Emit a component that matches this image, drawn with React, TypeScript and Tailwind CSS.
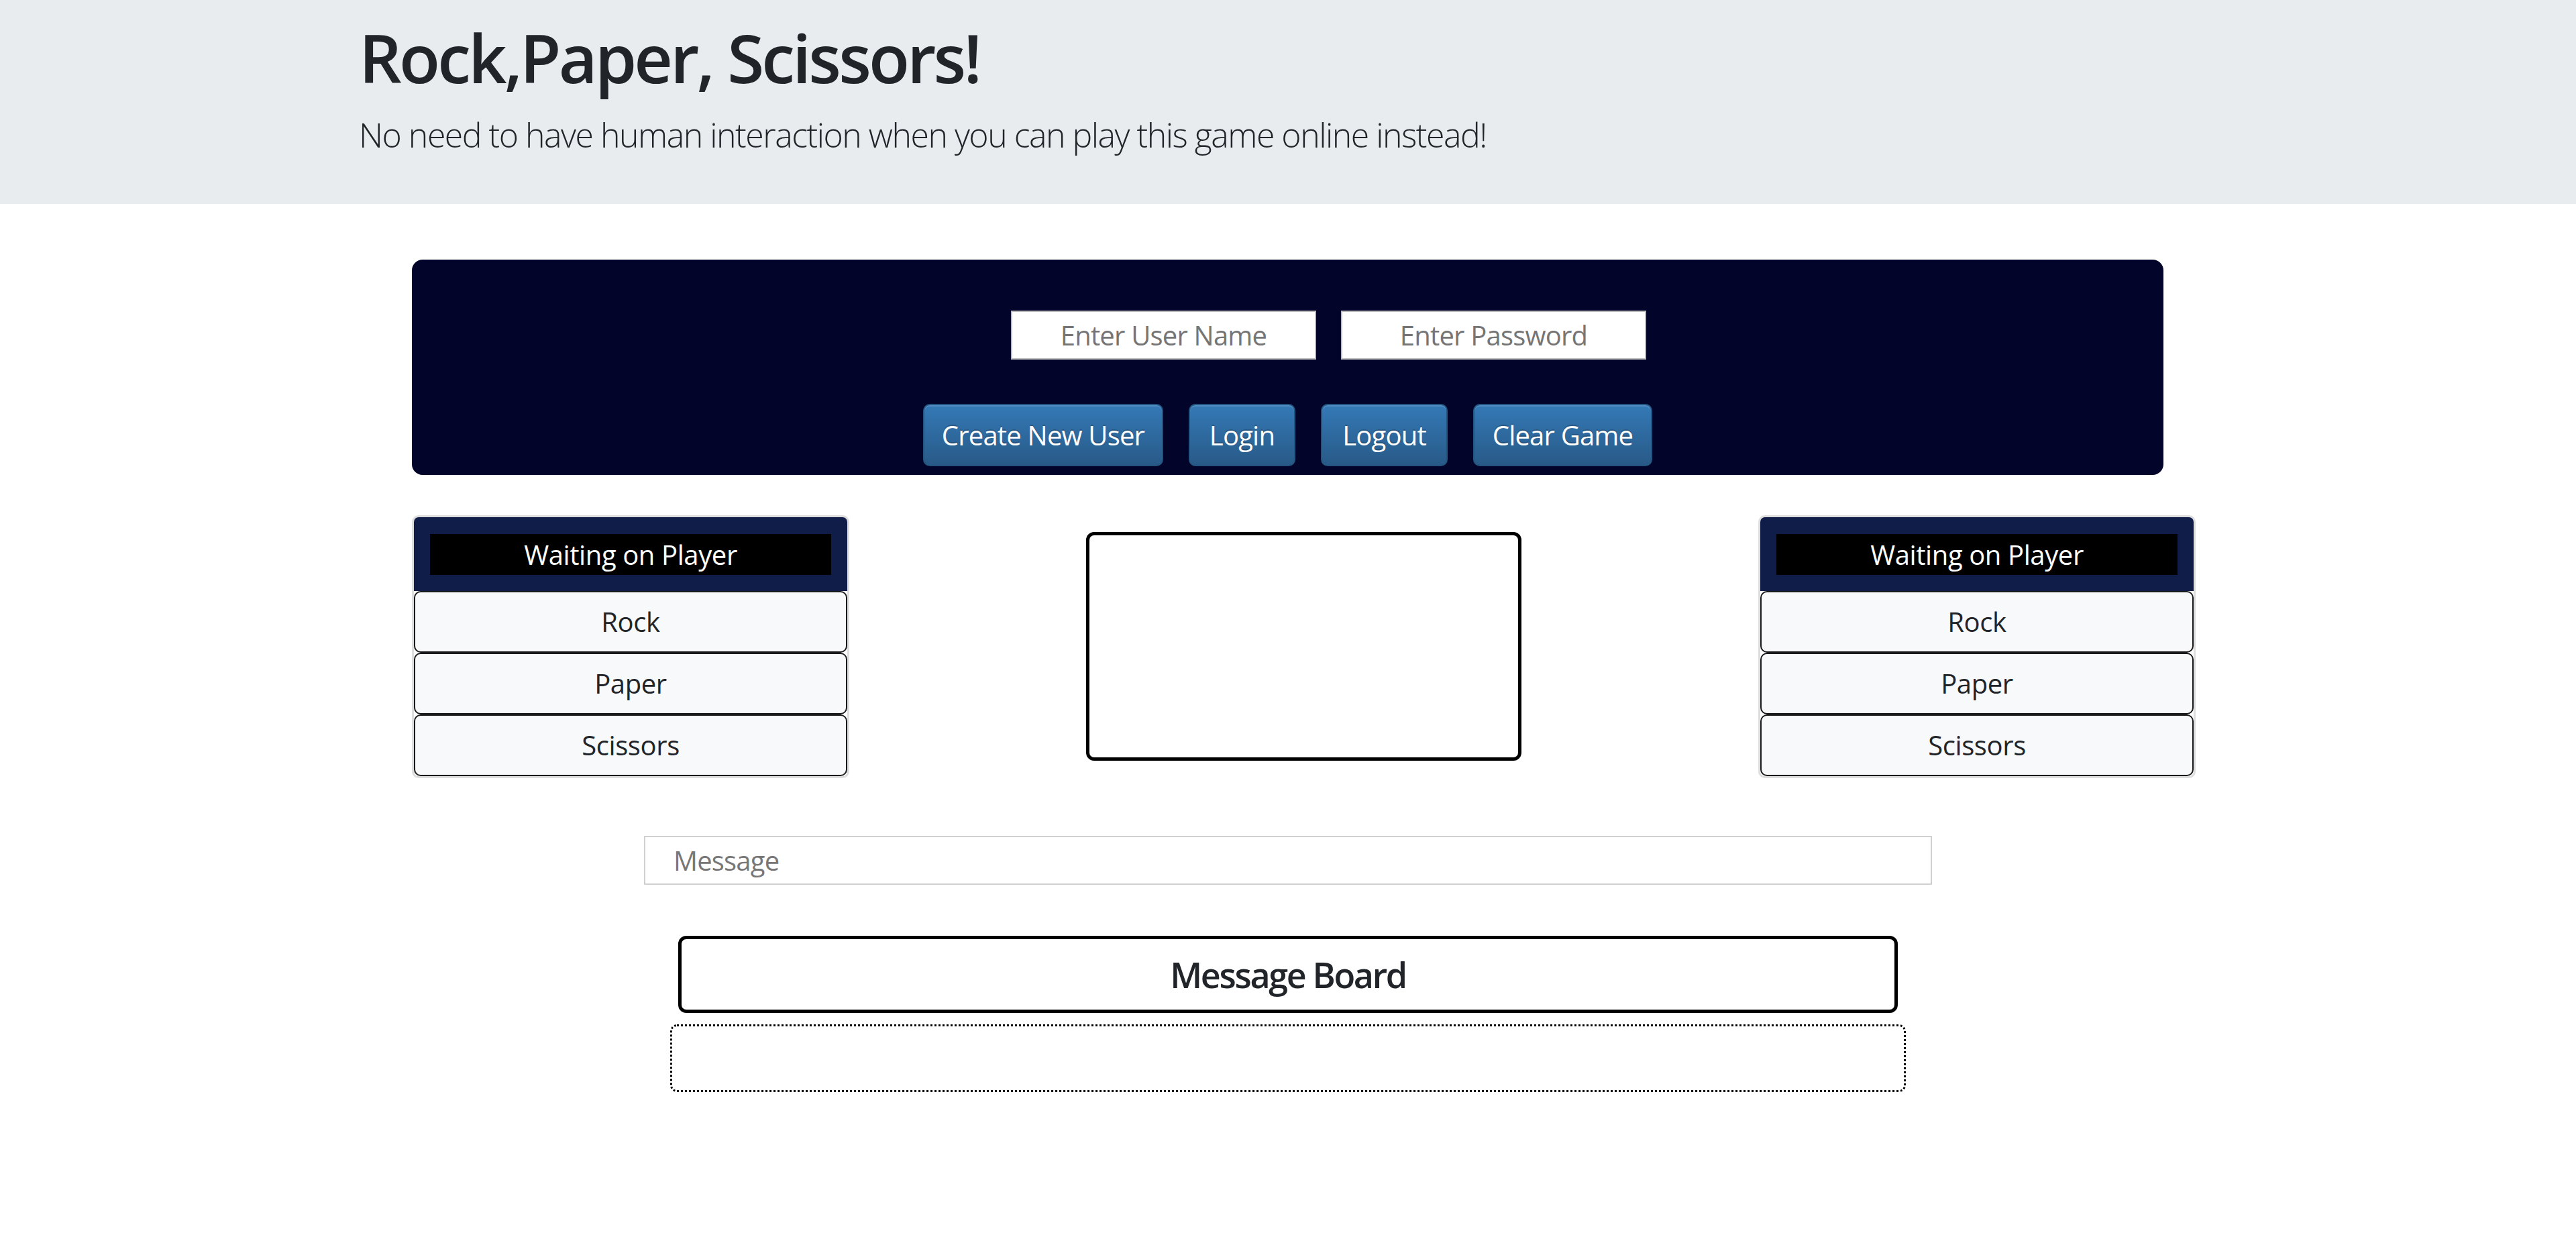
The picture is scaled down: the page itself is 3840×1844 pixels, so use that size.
import { useState } from "react";

const MOVES = ["Rock", "Paper", "Scissors"];

function PlayerCard() {
  return (
    <div className="w-[652px] border-[3px] border-[#dedede] rounded-[10px] overflow-hidden bg-white">
      {/* Status header */}
      <div className="bg-[#0f1d48] h-[110px] pt-[25px] px-[24px]">
        <div className="bg-black h-[61px] flex items-center justify-center text-white text-[40px] leading-none tracking-[-0.01em]">
          Waiting on Player
        </div>
      </div>
      {MOVES.map((m) => (
        <button
          key={m}
          className="w-full h-[92px] bg-[#f8f9fa] border-2 border-[#1a1a1a] rounded-[10px] text-[#212529] text-[40px] leading-none tracking-[-0.01em] flex items-center justify-center"
        >
          {m}
        </button>
      ))}
    </div>
  );
}

function ActionButton({ label, width }: { label: string; width: string }) {
  return (
    <button
      className={`${width} h-[93px] rounded-[10px] border-2 border-[#245580] bg-gradient-to-b from-[#3479b6] to-[#285a88] text-white text-[40px] leading-none tracking-[-0.02em] shadow-[inset_0_2px_0_rgba(255,255,255,0.15)] [text-shadow:0_-2px_0_rgba(0,0,0,0.2)]`}
    >
      {label}
    </button>
  );
}

export default function App() {
  const [user, setUser] = useState("");
  const [pass, setPass] = useState("");
  const [msg, setMsg] = useState("");

  return (
    <div className="min-h-screen bg-white text-[#212529] font-['Open_Sans','Noto_Sans',sans-serif]">
      {/* Jumbotron */}
      <header className="bg-[#e9ecef] h-[304px]">
        <div className="w-[2850px] mx-auto px-[40px] pt-[25px]">
          <h1 className="text-[100px] font-semibold leading-[1.2] tracking-[-0.038em] mb-[19px]">Rock,Paper, Scissors!</h1>
          <p className="text-[50px] font-light leading-[1.5] tracking-[-0.03em]">
            No need to have human interaction when you can play this game online instead!
          </p>
        </div>
      </header>

      <main className="w-[2659px] ml-[614px] mt-[83px]">
        {/* Login panel */}
        <div className="w-[2611px] h-[321px] rounded-[16px] bg-[#02042a] flex flex-col items-center pt-[76px]">
          <div className="flex gap-[37px] pl-[122px]">
            <input
              value={user}
              onChange={(e) => setUser(e.target.value)}
              placeholder="Enter User Name"
              className="w-[455px] h-[73px] bg-white border-2 border-[#bdbdbd] text-center text-[40px] tracking-[-0.02em] placeholder:text-[#757575] outline-none"
            />
            <input
              type="password"
              value={pass}
              onChange={(e) => setPass(e.target.value)}
              placeholder="Enter Password"
              className="w-[455px] h-[73px] bg-white border-2 border-[#bdbdbd] text-center text-[40px] tracking-[-0.02em] placeholder:text-[#757575] outline-none"
            />
          </div>
          <div className="flex gap-[38px] mt-[66px]">
            <ActionButton label="Create New User" width="w-[358px]" />
            <ActionButton label="Login" width="w-[159px]" />
            <ActionButton label="Logout" width="w-[189px]" />
            <ActionButton label="Clear Game" width="w-[267px]" />
          </div>
        </div>

        {/* Players + result */}
        <div className="flex justify-between items-start mt-[60px]">
          <PlayerCard />
          <div className="w-[649px] h-[341px] mt-[25px] border-[5px] border-black rounded-[12px]" />
          <PlayerCard />
        </div>
      </main>

      {/* Messages */}
      <div className="w-[1920px] mx-auto mt-[86px]">
        <input
          value={msg}
          onChange={(e) => setMsg(e.target.value)}
          placeholder="Message"
          className="w-full h-[73px] border-2 border-[#d0d0d0] px-[42px] text-[40px] tracking-[-0.02em] placeholder:text-[#777] outline-none"
        />
      </div>
      <div className="w-[1818px] h-[115px] mx-auto mt-[76px] border-[5px] border-black rounded-[12px] flex items-center justify-center text-[52px] font-semibold tracking-[-0.045em]">
        Message Board
      </div>
      <div className="w-[1842px] h-[101px] mx-auto mt-[17px] border-[3px] border-dotted border-black rounded-[10px]" />
    </div>
  );
}
